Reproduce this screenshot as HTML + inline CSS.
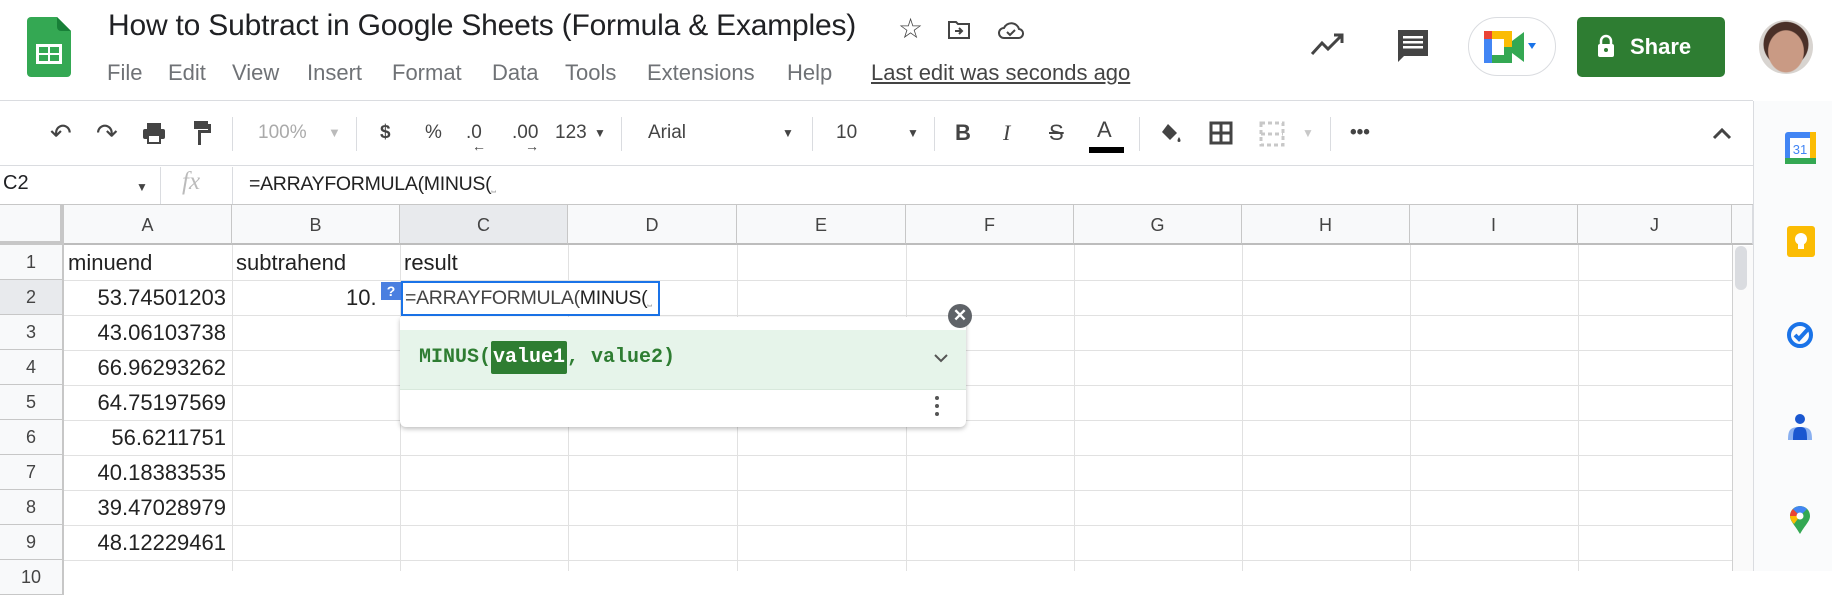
<!DOCTYPE html>
<html><head><meta charset="utf-8"><style>
*{margin:0;padding:0;box-sizing:border-box}
body{width:1832px;height:571px;overflow:hidden;background:#fff;font-family:"Liberation Sans",Arial,sans-serif;position:relative;color:#202124}
.a{position:absolute}
.menu span{position:absolute;top:60px;font-size:22px;color:#6f7276}
.tb{position:absolute;top:121px;font-size:19px;color:#444;line-height:24px}
.sep{position:absolute;top:117px;width:1px;height:34px;background:#dadce0}
.ch{position:absolute;top:205px;height:40px;background:#f8f9fa;border-right:1px solid #c7c7c7;border-bottom:2px solid #bdbdbd;text-align:center;line-height:40px;font-size:18px;color:#444}
.rh{position:absolute;left:0;width:64px;height:35px;background:#f8f9fa;border-right:2px solid #c7c7c7;border-bottom:1px solid #c7c7c7;text-align:center;line-height:34px;font-size:18px;color:#444}
.vl{position:absolute;top:245px;width:1px;height:326px;background:#e1e1e1}
.hl{position:absolute;left:64px;width:1668px;height:1px;background:#e1e1e1}
.c{position:absolute;font-size:22px;line-height:35px;color:#222}
.n{text-align:right;width:160px;left:66px}
.mono{font-family:"Liberation Mono",monospace}
</style></head><body>
<svg class="a" style="left:27px;top:17px" width="44" height="60" viewBox="0 0 44 60"><path d="M4 0h26l14 14v42a4 4 0 0 1-4 4H4a4 4 0 0 1-4-4V4a4 4 0 0 1 4-4z" fill="#34a853"/><path d="M30 0l14 14H34a4 4 0 0 1-4-4z" fill="#188038"/><rect x="9" y="27" width="26" height="20" fill="#fff"/><rect x="12" y="30" width="9" height="6" fill="#34a853"/><rect x="23" y="30" width="9" height="6" fill="#34a853"/><rect x="12" y="38" width="9" height="6" fill="#34a853"/><rect x="23" y="38" width="9" height="6" fill="#34a853"/></svg>
<div class="a" style="left:108px;top:9px;font-size:30px;color:#202124;letter-spacing:-0.2px">How to Subtract in Google Sheets (Formula &amp; Examples)</div>
<div class="a" style="left:898px;top:12px;font-size:28px;color:#444">☆</div>
<svg class="a" style="left:947px;top:17px" width="24" height="24" viewBox="0 0 24 24" fill="none" stroke="#444" stroke-width="2"><path d="M2 5h7l2 2h11v14H2z"/><path d="M8 14h7M12 11l3 3-3 3"/></svg>
<svg class="a" style="left:997px;top:18px" width="28" height="24" viewBox="0 0 28 24" fill="none" stroke="#444" stroke-width="2"><path d="M7 20a5 5 0 0 1 0-10 8 8 0 0 1 15 1 4.5 4.5 0 0 1-1 9z"/><path d="M10 14l3 3 5-5"/></svg>
<div class="menu"><span style="left:107px">File</span><span style="left:168px">Edit</span><span style="left:232px">View</span><span style="left:307px">Insert</span><span style="left:392px">Format</span><span style="left:492px">Data</span><span style="left:565px">Tools</span><span style="left:647px">Extensions</span><span style="left:787px">Help</span><span style="left:871px;color:#444;text-decoration:underline">Last edit was seconds ago</span></div>
<svg class="a" style="left:1310px;top:32px" width="36" height="26" viewBox="0 0 36 26" fill="none" stroke="#444" stroke-width="3"><path d="M2 22l10-11 6 6L32 3M24 3h8v8"/></svg>
<svg class="a" style="left:1396px;top:28px" width="34" height="36" viewBox="0 0 34 36"><path d="M2 2h30v26H8l-6 6z" fill="#444"/><rect x="7" y="8" width="20" height="2.5" fill="#fff"/><rect x="7" y="13" width="20" height="2.5" fill="#fff"/><rect x="7" y="18" width="20" height="2.5" fill="#fff"/></svg>
<div class="a" style="left:1468px;top:17px;width:88px;height:59px;border:1px solid #dadce0;border-radius:30px"></div>
<svg class="a" style="left:1484px;top:31px" width="52" height="32" viewBox="0 0 52 32"><rect x="0" y="0" width="20" height="16" fill="#4285f4"/><rect x="4" y="0" width="24" height="16" fill="#fbbc04"/><rect x="0" y="8" width="8" height="24" fill="#4285f4"/><rect x="8" y="16" width="20" height="16" fill="#34a853"/><rect x="0" y="0" width="8" height="8" fill="#ea4335"/><rect x="8" y="8" width="12" height="16" fill="#fff"/><path d="M28 10l12-9v30l-12-9z" fill="#34a853"/><path d="M44 12h8l-4 6z" fill="#1a73e8"/></svg>
<div class="a" style="left:1577px;top:17px;width:148px;height:60px;background:#2e7d32;border-radius:5px;color:#fff;font-size:22px;font-weight:bold;line-height:60px;padding-left:53px">Share</div>
<svg class="a" style="left:1597px;top:34px" width="18" height="24" viewBox="0 0 18 24"><path d="M4 10V7a5 5 0 0 1 10 0v3" fill="none" stroke="#fff" stroke-width="2.5"/><rect x="1" y="10" width="16" height="13" rx="2" fill="#fff"/><circle cx="9" cy="16" r="2" fill="#2e7d32"/></svg>
<div class="a" style="left:1759px;top:20px;width:54px;height:54px;border-radius:50%;background:radial-gradient(ellipse 34% 40% at 50% 58%,#c99a84 0 95%,transparent 100%),radial-gradient(circle at 50% 45%,#4a3028 0 55%,#d8d4d0 57%)"></div>
<div class="a" style="left:0;top:100px;width:1753px;height:1px;background:#dadce0"></div>
<div class="tb" style="left:50px;font-size:26px">↶</div>
<div class="tb" style="left:96px;font-size:26px">↷</div>
<svg class="a" style="left:142px;top:121px" width="24" height="24" viewBox="0 0 24 24" fill="#444"><rect x="5" y="2" width="14" height="6"/><rect x="1" y="8" width="22" height="10" rx="2"/><rect x="6" y="14" width="12" height="8" fill="#fff" stroke="#444" stroke-width="2"/></svg>
<svg class="a" style="left:192px;top:120px" width="20" height="26" viewBox="0 0 20 26" fill="#444"><rect x="2" y="1" width="14" height="8"/><path d="M16 4h3v9H9v12H6V10h10z"/></svg>
<div class="sep" style="left:232px"></div>
<div class="tb" style="left:258px;color:#aaa">100%</div><div class="tb" style="left:328px;color:#bbb;font-size:13px">▼</div>
<div class="sep" style="left:356px"></div>
<div class="tb" style="left:380px;font-weight:bold">$</div>
<div class="tb" style="left:425px">%</div>
<div class="tb" style="left:466px">.0</div><div class="a" style="left:472px;top:138px;font-size:14px;color:#444">←</div>
<div class="tb" style="left:512px">.00</div><div class="a" style="left:525px;top:138px;font-size:14px;color:#444">→</div>
<div class="tb" style="left:555px">123</div><div class="tb" style="left:594px;font-size:12px">▼</div>
<div class="sep" style="left:621px"></div>
<div class="tb" style="left:648px">Arial</div><div class="tb" style="left:782px;font-size:12px">▼</div>
<div class="sep" style="left:812px"></div>
<div class="tb" style="left:836px">10</div><div class="tb" style="left:907px;font-size:12px">▼</div>
<div class="sep" style="left:934px"></div>
<div class="tb" style="left:955px;font-weight:bold;font-size:22px">B</div>
<div class="tb" style="left:1003px;font-style:italic;font-size:22px;font-family:'Liberation Serif',serif">I</div>
<div class="tb" style="left:1049px;font-size:22px;text-decoration:line-through">S</div>
<div class="tb" style="left:1097px;font-size:22px;top:118px">A</div><div class="a" style="left:1089px;top:147px;width:35px;height:6px;background:#000"></div>
<div class="sep" style="left:1139px"></div>
<svg class="a" style="left:1158px;top:121px" width="26" height="26" viewBox="0 0 26 26" fill="#444"><path d="M10 3l9 9-7 7-8-8z"/><path d="M21 16c2 3 2 5 0 5s-2-2 0-5z"/></svg>
<svg class="a" style="left:1209px;top:121px" width="24" height="24" viewBox="0 0 24 24" fill="none" stroke="#444" stroke-width="3"><rect x="2" y="2" width="20" height="20"/><path d="M12 2v20M2 12h20"/></svg>
<svg class="a" style="left:1259px;top:121px" width="26" height="26" viewBox="0 0 26 26" fill="none" stroke="#c8c8c8" stroke-width="3" stroke-dasharray="4 3"><rect x="2" y="2" width="22" height="22"/><path d="M2 13h22"/></svg>
<div class="tb" style="left:1302px;color:#c8c8c8;font-size:12px">▼</div>
<div class="sep" style="left:1330px"></div>
<div class="tb" style="left:1350px;font-weight:bold">•••</div>
<svg class="a" style="left:1712px;top:126px" width="20" height="14" viewBox="0 0 20 14" fill="none" stroke="#444" stroke-width="3"><path d="M2 12l8-8 8 8"/></svg>
<div class="a" style="left:0;top:165px;width:1753px;height:1px;background:#dadce0"></div>
<div class="a" style="left:3px;top:172px;font-size:20px">C2</div>
<div class="a" style="left:136px;top:180px;font-size:12px;color:#444">▼</div>
<div class="a" style="left:160px;top:167px;width:1px;height:37px;background:#dadce0"></div>
<div class="a" style="left:182px;top:168px;font-size:25px;color:#bbb;font-style:italic;font-family:'Liberation Serif',serif">fx</div>
<div class="a" style="left:232px;top:167px;width:1px;height:37px;background:#dadce0"></div>
<div class="a" style="left:249px;top:173px;font-size:19.5px;color:#222;letter-spacing:-0.3px">=ARRAYFORMULA(MINUS(<span style="color:#aaa;font-size:12px">⎵</span></div>
<div class="a" style="left:0;top:204px;width:1753px;height:1px;background:#c7c7c7"></div>
<div class="ch" style="left:0;width:64px;border-right:4px solid #c7c7c7;border-bottom:4px solid #c7c7c7"></div>
<div class="ch" style="left:64px;width:168px">A</div>
<div class="ch" style="left:232px;width:168px">B</div>
<div class="ch" style="left:400px;width:168px;background:#e8eaed">C</div>
<div class="ch" style="left:568px;width:169px">D</div>
<div class="ch" style="left:737px;width:169px">E</div>
<div class="ch" style="left:906px;width:168px">F</div>
<div class="ch" style="left:1074px;width:168px">G</div>
<div class="ch" style="left:1242px;width:168px">H</div>
<div class="ch" style="left:1410px;width:168px">I</div>
<div class="ch" style="left:1578px;width:154px">J</div>
<div class="ch" style="left:1732px;width:21px;border-right:1px solid #dadce0"></div>
<div class="vl" style="left:232px"></div><div class="vl" style="left:400px"></div><div class="vl" style="left:568px"></div><div class="vl" style="left:737px"></div><div class="vl" style="left:906px"></div><div class="vl" style="left:1074px"></div><div class="vl" style="left:1242px"></div><div class="vl" style="left:1410px"></div><div class="vl" style="left:1578px"></div><div class="vl" style="left:1732px;background:#d0d0d0"></div>
<div class="hl" style="top:280px"></div><div class="hl" style="top:315px"></div><div class="hl" style="top:350px"></div><div class="hl" style="top:385px"></div><div class="hl" style="top:420px"></div><div class="hl" style="top:455px"></div><div class="hl" style="top:490px"></div><div class="hl" style="top:525px"></div><div class="hl" style="top:560px"></div>
<div class="rh" style="top:245px">1</div><div class="rh" style="top:280px;background:#e8eaed">2</div><div class="rh" style="top:315px">3</div><div class="rh" style="top:350px">4</div><div class="rh" style="top:385px">5</div><div class="rh" style="top:420px">6</div><div class="rh" style="top:455px">7</div><div class="rh" style="top:490px">8</div><div class="rh" style="top:525px">9</div><div class="rh" style="top:560px">10</div>
<div class="a" style="left:1733px;top:246px;width:20px;height:325px;background:#fafafa"></div>
<div class="a" style="left:1735px;top:246px;width:12px;height:44px;background:#dadce0;border-radius:6px"></div>
<div class="c" style="left:68px;top:245px">minuend</div>
<div class="c" style="left:236px;top:245px">subtrahend</div>
<div class="c" style="left:404px;top:245px">result</div>
<div class="c n" style="top:280px">53.74501203</div>
<div class="c n" style="top:315px">43.06103738</div>
<div class="c n" style="top:350px">66.96293262</div>
<div class="c n" style="top:385px">64.75197569</div>
<div class="c n" style="top:420px">56.6211751</div>
<div class="c n" style="top:455px">40.18383535</div>
<div class="c n" style="top:490px">39.47028979</div>
<div class="c n" style="top:525px">48.12229461</div>
<div class="c" style="left:346px;top:280px">10.</div>
<div class="a" style="left:381px;top:282px;width:20px;height:18px;background:#4a7fe0;color:#fff;font-size:14px;font-weight:bold;text-align:center;line-height:18px">?</div>
<div class="a" style="left:401px;top:281px;width:259px;height:35px;border:2px solid #1a73e8;background:#fff"></div>
<div class="a" style="left:405px;top:287px;font-size:19.5px;color:#444;letter-spacing:-0.3px">=ARRAYFORMULA(<span style="color:#222">MINUS(</span><span style="color:#aaa;font-size:12px">⎵</span></div>
<div class="a" style="left:400px;top:317px;width:566px;height:110px;background:#fff;border-radius:0 0 6px 6px;box-shadow:0 2px 5px rgba(0,0,0,.25)"></div>
<div class="a" style="left:400px;top:330px;width:566px;height:60px;background:#e6f4ea;border-bottom:1px solid #d8e8dc"></div>
<div class="a mono" style="left:419px;top:346px;font-size:20px;font-weight:bold;color:#2e7d32">MINUS(<span style="background:#2e7d32;color:#fff;padding:5px 2px;border-radius:2px">value1</span>, value2)</div>
<svg class="a" style="left:932px;top:352px" width="18" height="12" viewBox="0 0 18 12" fill="none" stroke="#555" stroke-width="2"><path d="M3 3l6 6 6-6"/></svg>
<div class="a" style="left:935px;top:396px;width:4px;height:4px;border-radius:2px;background:#555;box-shadow:0 8px 0 #555,0 16px 0 #555"></div>
<div class="a" style="left:948px;top:304px;width:24px;height:24px;border-radius:50%;background:#5f6368;color:#fff;font-size:17px;font-weight:bold;text-align:center;line-height:24px">✕</div>
<div class="a" style="left:1753px;top:101px;width:1px;height:470px;background:#dadce0"></div>
<div class="a" style="left:1754px;top:101px;width:78px;height:470px;background:#fafbfc"></div>
<svg class="a" style="left:1785px;top:132px" width="31" height="32" viewBox="0 0 31 32"><rect x="0" y="0" width="31" height="32" rx="3" fill="#4285f4"/><rect x="0" y="26" width="31" height="6" fill="#34a853"/><rect x="25" y="0" width="6" height="26" fill="#fbbc04"/><rect x="5" y="6" width="20" height="20" fill="#fff"/><text x="15" y="22" font-size="13" text-anchor="middle" fill="#4285f4" font-family="Liberation Sans">31</text></svg>
<svg class="a" style="left:1787px;top:226px" width="28" height="31" viewBox="0 0 28 31"><rect width="28" height="31" rx="3" fill="#fbbc04"/><circle cx="14" cy="13" r="6" fill="#fff"/><rect x="11" y="18" width="6" height="5" fill="#fff"/></svg>
<svg class="a" style="left:1786px;top:319px" width="30" height="30" viewBox="0 0 30 30"><circle cx="14" cy="16" r="11" fill="none" stroke="#1a73e8" stroke-width="4"/><path d="M9 16l4 4 10-11" fill="none" stroke="#1a73e8" stroke-width="4"/></svg>
<svg class="a" style="left:1788px;top:413px" width="24" height="28" viewBox="0 0 24 28"><circle cx="12" cy="6" r="5" fill="#1a57d0"/><path d="M0 27c0-10 2-13 12-13s12 3 12 13z" fill="#8ab0f0"/><path d="M5 27c0-10 1-13 7-13s7 3 7 13z" fill="#1a57d0"/></svg>
<svg class="a" style="left:1790px;top:506px" width="20" height="29" viewBox="0 0 20 29"><path d="M10 28C4 18 0 15 0 10a10 10 0 0 1 20 0c0 5-4 8-10 18z" fill="#34a853"/><path d="M0 10a10 10 0 0 1 3-7l7 7z" fill="#ea4335"/><path d="M3 3a10 10 0 0 1 14 0l-7 7z" fill="#4285f4"/><path d="M0 10l10 0-6 8C1 15 0 12 0 10z" fill="#fbbc04"/><circle cx="10" cy="10" r="3.5" fill="#fff"/></svg>
</body></html>
